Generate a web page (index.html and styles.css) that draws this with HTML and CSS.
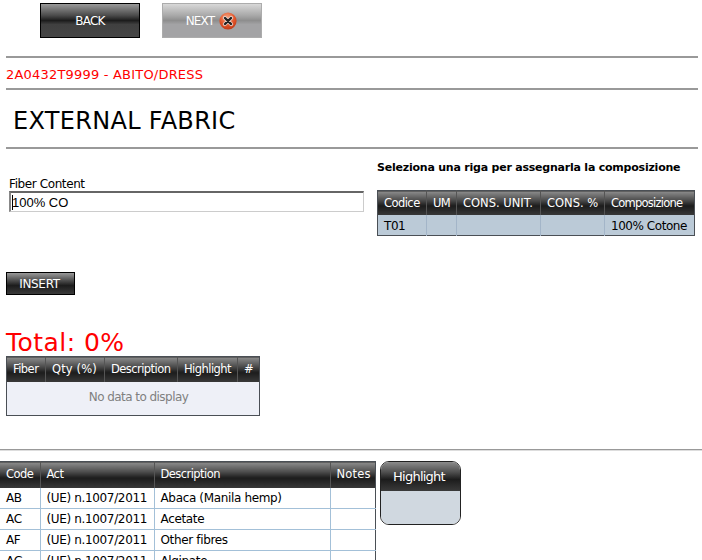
FILE: index.html
```html
<!DOCTYPE html>
<html lang="it">
<head>
<meta charset="utf-8">
<title>External Fabric</title>
<link rel="stylesheet" href="styles.css">
</head>
<body>
<div class="page">
  <div class="toolbar">
    <a class="btn btn-back">BACK</a>
    <a class="btn btn-next">NEXT
      <svg class="stop" width="18" height="18" viewBox="0 0 18 18">
        <defs><radialGradient id="ball" cx="0.45" cy="0.3" r="0.8"><stop offset="0" stop-color="#f4a582"/><stop offset="0.55" stop-color="#e2552a"/><stop offset="1" stop-color="#b5300f"/></radialGradient></defs>
        <circle cx="9" cy="9" r="8.6" fill="url(#ball)"/>
        <path d="M5.8 5.8 12.2 12.2M12.2 5.8 5.8 12.2" stroke="#eee" stroke-opacity=".75" stroke-width="4" stroke-linecap="round"/>
        <path d="M6 6 12 12M12 6 6 12" stroke="#222" stroke-width="2.4" stroke-linecap="round"/>
      </svg>
    </a>
  </div>
  <div class="rule rule-a"></div>
  <div class="code">2A0432T9999 - ABITO/DRESS</div>
  <div class="rule"></div>
  <h1 class="title">EXTERNAL FABRIC</h1>
  <div class="rule"></div>
  <div class="form-row">
    <div class="form-left">
      <label class="field-label">Fiber Content</label>
      <div class="field"><span class="caret"></span>100% CO</div>
    </div>
    <div class="form-right">
      <div class="hint">Seleziona una riga per assegnarla la composizione</div>
      <table class="grid grid-comp">
        <thead><tr><th class="c1">Codice</th><th class="c2">UM</th><th class="c3">CONS. UNIT.</th><th class="c4">CONS. %</th><th class="c5">Composizione</th></tr></thead>
        <tbody><tr class="selected"><td>T01</td><td></td><td></td><td></td><td>100% Cotone</td></tr></tbody>
      </table>
    </div>
  </div>
  <a class="btn-insert">INSERT</a>
  <div class="total">Total: 0%</div>
  <table class="grid grid-fibers">
    <thead><tr><th class="f1">Fiber</th><th class="f2">Qty (%)</th><th class="f3">Description</th><th class="f4">Highlight</th><th class="f5">#</th></tr></thead>
    <tbody><tr class="empty"><td colspan="5">No data to display</td></tr></tbody>
  </table>
  <div class="rule-full"></div>
  <div class="bottom">
    <table class="grid grid-codes">
      <thead><tr><th class="k1">Code</th><th class="k2">Act</th><th class="k3">Description</th><th class="k4">Notes</th></tr></thead>
      <tbody>
        <tr><td>AB</td><td>(UE) n.1007/2011</td><td>Abaca (Manila hemp)</td><td></td></tr>
        <tr><td>AC</td><td>(UE) n.1007/2011</td><td>Acetate</td><td></td></tr>
        <tr><td>AF</td><td>(UE) n.1007/2011</td><td>Other fibres</td><td></td></tr>
        <tr><td>AG</td><td>(UE) n.1007/2011</td><td>Alginate</td><td></td></tr>
      </tbody>
    </table>
    <div class="panel">
      <div class="panel-head">Highlight</div>
      <div class="panel-body"></div>
    </div>
  </div>
</div>
</body>
</html>
```
FILE: styles.css
```css
html, body { margin: 0; padding: 0; height: 560px; overflow: hidden; background: #fff; }
body { font-family: "DejaVu Sans", Verdana, sans-serif; color: #000; }
.page { width: 702px; height: 560px; overflow: hidden; }

.toolbar { display: flex; gap: 22px; padding: 3px 0 0 40px; height: 35px; }
.btn {
  box-sizing: border-box; width: 100px; height: 35px;
  display: flex; align-items: center; justify-content: center;
  font-size: 12px; letter-spacing: -0.8px; color: #fff;
  font-family: "DejaVu Sans", sans-serif;
}
.btn-back {
  border: 1px solid #000;
  background: linear-gradient(#9a9a9a 0, #4a4a4a 35%, #1c1c1c 50%, #404040 62%, #454545 100%);
}
.btn-next {
  gap: 5px; padding-right: 1px;
  border: 1px solid #acacac;
  background: linear-gradient(#d8d8d8 0, #a8a8a8 35%, #8e8e8e 50%, #a3a3a5 62%, #a3a3a5 100%);
}
.stop { flex: none; }

.rule { height: 2px; margin: 0 4px 0 6px; background: #999; }
.rule-a { margin-top: 18px; }
.code { height: 30px; box-sizing: border-box; padding: 9px 0 0 6px; font-size: 13px; line-height: 16px; color: #f00; letter-spacing: 0.2px; }
.title { margin: 0; height: 57px; box-sizing: border-box; padding: 16px 0 0 13px; font-size: 24px; line-height: 30px; font-weight: normal; letter-spacing: 0.3px; }

.form-row { display: flex; height: 96px; }
.form-left { width: 371px; box-sizing: border-box; padding: 28px 0 0 9px; }
.field-label { display: block; font-size: 12px; line-height: 14px; letter-spacing: -0.4px; }
.field {
  box-sizing: border-box; width: 355px; height: 21px;
  display: flex; align-items: center;
  border: 1px solid #ccc; border-top: 2px solid #666; border-left: 2px solid #888;
  padding-left: 1px; font-family: "Liberation Sans", sans-serif; font-size: 13px;
}
.caret { width: 1px; height: 15px; background: #000; margin-right: -1px; }
.form-right { width: 331px; }
.hint { font-size: 11px; font-weight: bold; letter-spacing: -0.22px; line-height: 14px; padding: 12px 0 0 6px; height: 31px; box-sizing: border-box; margin-bottom: 10px; white-space: nowrap; }

.grid { border-collapse: collapse; table-layout: fixed; font-size: 12px; letter-spacing: -0.35px; }
.grid th {
  box-sizing: border-box; height: 25px; padding: 0 0 0 7px; text-align: left; font-weight: normal; color: #fff;
  font-size: 11.5px; letter-spacing: -0.55px;
  white-space: nowrap; overflow: hidden;
  background: linear-gradient(#8c8c8c 0, #4f4f4f 35%, #1c1c1c 60%, #3a3a3a 100%);
  border-right: 1px solid #555;
}
.grid th:last-child { border-right: 0; }
.grid td { white-space: nowrap; overflow: hidden; }

.grid-comp { width: 317px; margin-left: 6px; border: 1px solid #4a4f55; }
.grid-comp th { height: 24px; padding-left: 6px; padding-top: 1px; }
.c1 { width: 49px; } .c2 { width: 30px; } .c3 { width: 84px; } .c4 { width: 64px; } .c5 { width: 90px; }
.grid .c3, .grid .c4 { letter-spacing: 0; }
.grid .c5 { letter-spacing: -0.75px; }
.selected td { box-sizing: border-box; height: 21px; padding: 3px 0 0 6px; background: #bbcad7; border-right: 1px solid #a3b5c8; letter-spacing: -0.45px; }
.selected td:last-child { border-right: 0; }

.btn-insert {
  display: flex; align-items: center; justify-content: center; box-sizing: border-box;
  width: 69px; height: 23px; margin: 27px 0 0 6px; padding-right: 2px;
  border: 1px solid #000; color: #fff; font-size: 12px; letter-spacing: -0.3px;
  background: linear-gradient(#9a9a9a 0, #4f4f4f 35%, #1c1c1c 60%, #3a3a3a 100%);
}
.total { margin: 34px 0 0 6px; height: 27px; font-size: 25px; line-height: 27px; color: #f00; letter-spacing: 0.45px; }

.grid-fibers { width: 253px; margin-left: 6px; border: 1px solid #4a4f55; }
.grid-fibers th { padding-left: 6px; }
.f1 { width: 39px; } .f2 { width: 59px; } .f3 { width: 73px; } .f4 { width: 60px; } .f5 { width: 22px; }
.grid .f2 { letter-spacing: 0.15px; }
.empty td { height: 34px; padding: 0 0 3px 11px; box-sizing: border-box; text-align: center; color: #808080; background: #eef0f7; letter-spacing: -0.55px; }

.rule-full { height: 1px; margin-top: 33px; background: #999; border-bottom: 1px solid #ddd; }

.bottom { display: flex; align-items: flex-start; gap: 4px; margin-top: 10px; }
.grid-codes { width: 375px; border-right: 1px solid #4a4f55; border-top: 1px solid #4a4f55; }
.grid-codes th { height: 26px; padding-left: 6px; padding-bottom: 2px; }
.k1 { width: 40px; } .k2 { width: 114px; } .k3 { width: 176px; } .k4 { width: 45px; }
.grid .k4 { letter-spacing: 0.2px; }
.grid-codes td { height: 20px; padding: 0 0 0 6px; border-right: 1px solid #a3c0d8; border-bottom: 1px solid #a3c0d8; }
.grid-codes td:last-child { border-right: 0; }

.panel { box-sizing: border-box; width: 81px; height: 64px; border: 1px solid #222; border-radius: 9px; overflow: hidden; }
.panel-head {
  height: 29px; line-height: 30px; padding-right: 2px; text-align: center; color: #fff; font-size: 13px; letter-spacing: -0.75px;
  background: linear-gradient(#8c8c8c 0, #4f4f4f 35%, #1c1c1c 60%, #3a3a3a 100%);
}
.panel-body { height: 33px; background: #d0d8e0; }
```
